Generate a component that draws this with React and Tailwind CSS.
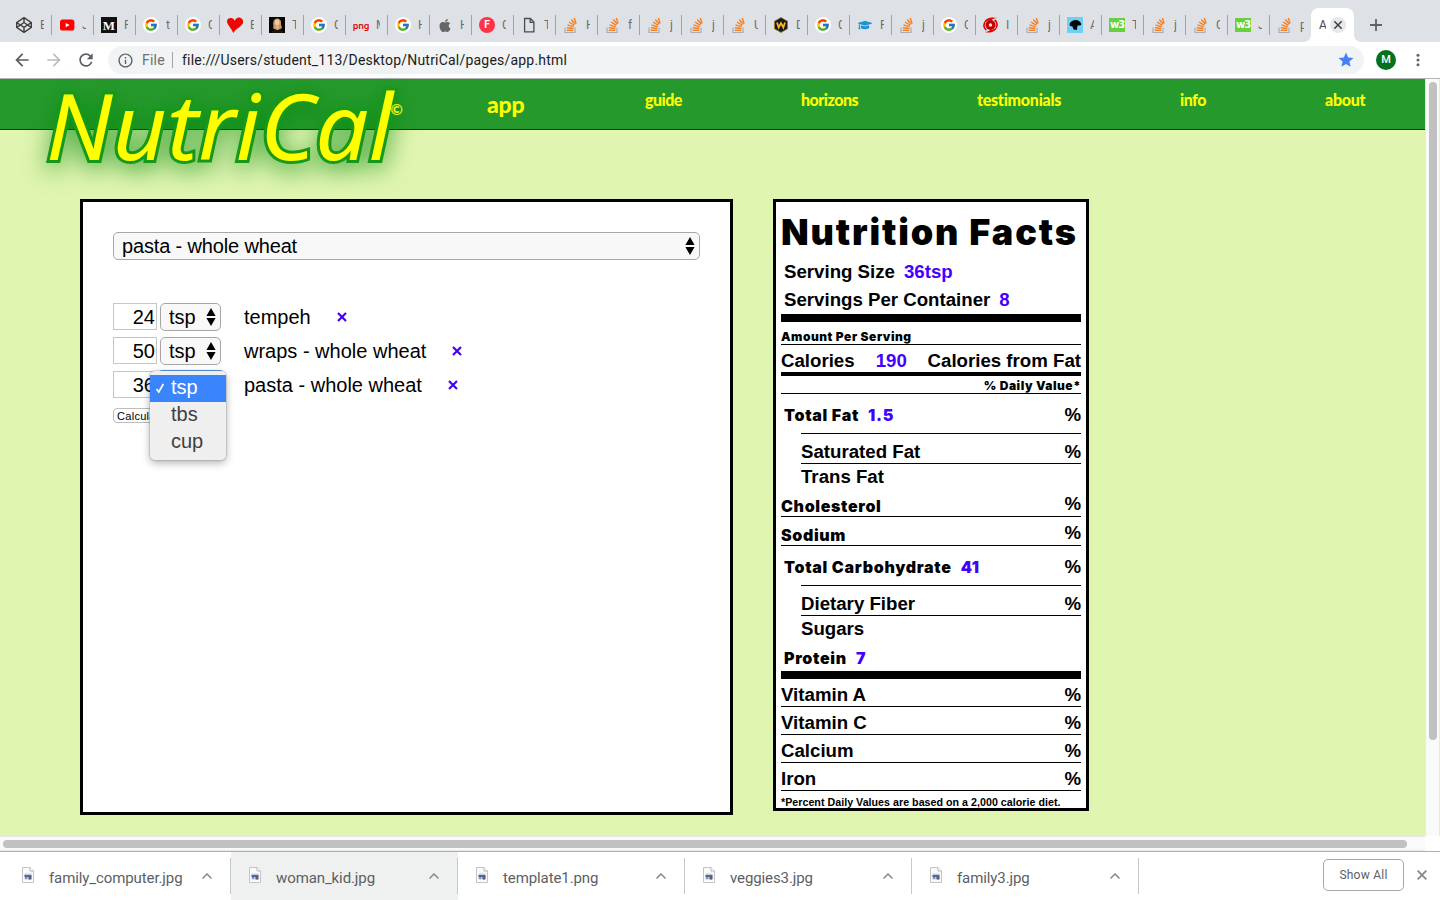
import React from "react";
import { FcGoogle } from "react-icons/fc";
import { FaApple, FaCodepen, FaGraduationCap } from "react-icons/fa";
import { MdArrowBack, MdArrowForward, MdRefresh, MdStar, MdInfoOutline } from "react-icons/md";

function Favicon({ kind }) {
  switch (kind) {
    case "codepen":
      return <FaCodepen className="h-4 w-4 text-[#3c3c3c]" />;
    case "youtube":
      return (
        <svg viewBox="0 0 16 16" className="h-4 w-4">
          <rect x="1" y="2.6" width="14.4" height="11" rx="2.6" fill="#f00" />
          <path d="M6.7 5.9v4.4l3.9-2.2z" fill="#fff" />
        </svg>
      );
    case "medium":
      return (
        <span className="flex h-4 w-4 items-center justify-center bg-[#12100e] font-['Liberation_Serif',serif] text-[13px] leading-none font-bold text-white">
          M
        </span>
      );
    case "google":
      return (
        <span className="flex h-4 w-4 items-center justify-center rounded-full bg-white">
          <FcGoogle className="h-[14px] w-[14px]" />
        </span>
      );
    case "heart":
      return (
        <svg viewBox="0 0 16 16" className="h-4 w-4">
          <path d="M6.2 16C5 12 .2 8 0 4.600 0 1.500 2.700.6 4.600 1 6.500 1.500 7.600 3 7.800 4 8.500 1.800 10.500.2 12.700.6 15.500 1.200 16.800 4 15.800 6.500 14.500 9.500 9 11.500 6.200 16z" fill="#f00500" />
        </svg>
      );
    case "photo":
      return (
        <svg viewBox="0 0 16 16" className="h-4 w-4">
          <rect width="16" height="16" fill="#0a0606" />
          <path d="M4.500 9C3.500 4 5.500 1.500 8 1.400c3 0 4.600 2.300 4 6L13 11l-2.500 1.500H6L4 11z" fill="#c99a62" />
          <ellipse cx="8.200" cy="5.400" rx="2.200" ry="3" fill="#f2c9a4" />
          <path d="M6.500 9h3.500l-.8 4H7.600z" fill="#e0ad87" />
          <path d="M2 16c1-2.500 3-3.500 4.500-3.500l2 1 2-1c1.500 0 3 1 3.500 3.500z" fill="#1a1212" />
        </svg>
      );
    case "png":
      return (
        <span className="flex h-4 w-4 items-center justify-center font-['Noto_Sans',sans-serif] text-[9px] leading-none font-semibold tracking-[-0.2px] text-[#e00000]">
          png
        </span>
      );
    case "apple":
      return <FaApple className="h-[15px] w-4 text-[#666]" />;
    case "f":
      return (
        <span className="flex h-4 w-4 items-center justify-center rounded-full bg-[#ff3347] font-['Roboto',sans-serif] text-[10px] leading-none font-bold text-white">
          F
        </span>
      );
    case "file":
      return (
        <svg viewBox="0 0 16 16" className="h-4 w-4" fill="none" stroke="#4a4d51" strokeWidth="1.300">
          <path d="M3.600 1.500h5.800l3.500 3.500v9.900H3.600z" />
          <path d="M9.200 1.500v3.800h3.700" />
        </svg>
      );
    case "so":
      return (
        <svg viewBox="0 0 16 16" className="h-4 w-4" fill="none">
          <path d="M2 10.500v5h10v-5" stroke="#a9adb1" strokeWidth="1.200" />
          <g stroke="#f48024" strokeWidth="1.400">
            <path d="M3.700 13.300h6.500" />
            <path d="M3.900 10.700l6.500 .8" />
            <path d="M4.500 7.900l6.200 2" />
            <path d="M6 5l5.400 3.400" />
            <path d="M8.300 2.500l4 4.800" />
            <path d="M11.300 1l1.800 5.600" />
          </g>
        </svg>
      );
    case "w":
      return (
        <svg viewBox="0 0 16 16" className="h-4 w-4">
          <path d="M8 .5l6.500 3.700v7.600L8 15.500 1.500 11.800V4.200z" fill="#161a26" stroke="#a07a20" strokeWidth=".8" />
          <path d="M4 5.500l1.700 5L8 6.200l2.300 4.300 1.700-5" fill="none" stroke="#fdb81e" strokeWidth="1.800" />
        </svg>
      );
    case "cap":
      return (
        <span className="flex h-4 w-4 items-center justify-center">
          <FaGraduationCap className="h-[12px] w-[14px] text-[#1795d4]" />
        </span>
      );
    case "spiral":
      return (
        <svg viewBox="0 0 16 16" className="h-4 w-4">
          <circle cx="7.500" cy="8" r="5" fill="#c40000" />
          <path d="M.8 7C1 2 7-.8 14 1 11 1.300 9.500 2 8.500 3 5 3 3 4.500.8 7z" fill="#e60000" />
          <path d="M14.200 9c-.2 5-6.200 7.800-12.200 6 3-.3 4-1 5-2 3.500 0 5.500-1.500 7.200-4z" fill="#e60000" />
          <path d="M1.800 5.500c-1.500 3-.5 6 1.500 7.500M13.200 10.500c1.500-3 .5-6-1.500-7.500" stroke="#e00000" strokeWidth="1.600" fill="none" />
          <path d="M4 6.500C5 4.500 7 4 9 4.300M11 9.500c-1 2-3 2.500-5 2.200" stroke="#800" strokeWidth=".7" fill="none" />
          <circle cx="7.500" cy="8" r="1.700" fill="#ffdada" />
        </svg>
      );
    case "dog":
      return (
        <svg viewBox="0 0 16 16" className="h-4 w-4">
          <rect width="16" height="16" fill="#6fd0f5" />
          <path d="M2.500 7C4 3.500 9 2 12 4c1.500 1.500 2.500 2.500 2.300 3.500-.5 1.200-2.800 1-3.800 1.200L9.800 13 6.500 12.500 5.500 9.500 3 9z" fill="#080808" />
        </svg>
      );
    default:
      return (
        <span className="flex h-[14px] w-4 items-center justify-center bg-[#67d03e] font-['DejaVu_Sans',sans-serif] text-[10px] leading-none font-bold tracking-[-1px] text-white">
          w3
        </span>
      );
  }
}

const TABS = [
  ["codepen", "E"], ["youtube", "J"], ["medium", "F"], ["google", "t"], ["google", "C"],
  ["heart", "E"], ["photo", "T"], ["google", "C"], ["png", "M"], ["google", "H"],
  ["apple", "H"], ["f", "C"], ["file", "T"], ["so", "H"], ["so", "f"], ["so", "j"],
  ["so", "j"], ["so", "U"], ["w", "D"], ["google", "C"], ["cap", "F"], ["so", "j"],
  ["google", "C"], ["spiral", "I"], ["so", "j"], ["dog", "A"], ["w3", "T"], ["so", "j"],
  ["so", "C"], ["w3", "J"], ["so", "p"],
];

function TabStrip() {
  return (
    <div className="flex h-[42px] items-end bg-[#dee1e6] pl-[10px] font-['Roboto',sans-serif] text-[12px]">
      {TABS.map(([kind, letter], i) => (
        <div key={i} className={`flex h-[34px] w-[42px] shrink-0 items-center ${i === 0 ? "pl-[6px]" : "pl-[7px]"}`}>
          <Favicon kind={kind} />
          <span className={`w-1 overflow-hidden text-[#6b6e73] ${i === 0 ? "ml-2" : "ml-[7px]"}`}>{letter}</span>
          {i < TABS.length - 1 && <span className="ml-auto h-5 w-px bg-[#a0a3a8]" />}
        </div>
      ))}
      <svg viewBox="0 0 8 8" className="-ml-[9px] h-2 w-2 shrink-0">
        <path d="M8 0v8H0c5 0 8-3 8-8z" fill="#fff" />
      </svg>
      <div className="flex h-[34px] w-[43px] shrink-0 items-center rounded-t-lg bg-white pl-2">
        <span className="w-[7px] overflow-hidden text-[#45474a]">A</span>
        <span className="ml-1 flex h-4 w-4 items-center justify-center rounded-full bg-[#e6e8eb]">
          <svg viewBox="0 0 8 8" className="h-2 w-2" stroke="#3c4043" strokeWidth="1.500">
            <path d="M.3.3l7.400 7.400M7.700.3L.3 7.700" />
          </svg>
        </span>
      </div>
      <svg viewBox="0 0 8 8" className="h-2 w-2 shrink-0">
        <path d="M0 0v8h8C3 8 0 5 0 0z" fill="#fff" />
      </svg>
      <svg viewBox="0 0 12 12" className="mb-[11px] ml-[8px] h-3 w-3" stroke="#5f6368" strokeWidth="1.800">
        <path d="M6 0v12M0 6h12" />
      </svg>
    </div>
  );
}

function Toolbar() {
  return (
    <div className="flex h-[37px] items-center border-b border-[#b4b4b6] bg-white font-['Roboto',sans-serif] text-[14px]">
      <MdArrowBack className="ml-[12px] h-5 w-5 text-[#5a5d62]" />
      <MdArrowForward className="ml-[12px] h-5 w-5 text-[#babcbe]" />
      <MdRefresh className="ml-[12px] h-5 w-5 text-[#5a5d62]" />
      <div className="ml-[12px] flex h-7 w-[1256px] items-center rounded-full bg-[#f1f3f4] pr-[9px] pl-[9px]">
        <MdInfoOutline className="h-[17px] w-[17px] text-[#5f6368]" />
        <span className="ml-2 w-[30px] tracking-[0.2px] text-[#6b6f74]">File</span>
        <span className="h-4 w-px bg-[#a2a5a9]" />
        <span className="ml-[9px] tracking-[0.210px] whitespace-nowrap text-[#1b1d20]">
          file:///Users/student_113/Desktop/NutriCal/pages/app.html
        </span>
        <MdStar className="ml-auto h-[18px] w-[18px] text-[#4380f5]" />
      </div>
      <span className="ml-3 flex h-5 w-5 items-center justify-center rounded-full bg-[#03711f] text-[11px] font-medium text-white">M</span>
      <svg viewBox="0 0 4 14" className="ml-[20px] h-[14px] w-1" fill="#5f6368">
        <circle cx="2" cy="2.200" r="1.500" />
        <circle cx="2" cy="7" r="1.500" />
        <circle cx="2" cy="11.800" r="1.500" />
      </svg>
    </div>
  );
}

function Logo() {
  return (
    <svg viewBox="0 0 400 110" className="relative z-10 ml-[30px] h-[110px] w-[400px] shrink-0 overflow-visible">
      <g className="[filter:drop-shadow(0_6px_12px_rgba(0,135,10,0.75))]">
        <text
          x="16"
          y="81"
          textLength="347"
          lengthAdjust="spacingAndGlyphs"
          className="fill-[#ffff00] stroke-[#169818] font-['Noto_Sans','Open_Sans',sans-serif] text-[92px] font-normal italic [paint-order:stroke]"
          strokeWidth="6"
        >
          NutriCal
        </text>
      </g>
      <text x="360.500" y="36" className="fill-[#e8f51a] font-['Lato',sans-serif] text-[15px] font-black">
        ©
      </text>
    </svg>
  );
}

function SiteHeader() {
  return (
    <header className="flex h-[51px] items-start border-b border-[#063a06] bg-[#26992c] font-['Lato',sans-serif] text-[16px] leading-5 font-black text-[#ffff00]">
      <Logo />
      <nav className="flex shrink-0 items-start pt-[11px] whitespace-nowrap">
        <a className="ml-[57px] w-[158px] pt-[4px] text-[23px] tracking-[-0.2px]">app</a>
        <a className="w-[156px] tracking-[-0.5px]">guide</a>
        <a className="w-[176px] tracking-[-0.5px]">horizons</a>
        <a className="w-[203px] tracking-[-0.25px]">testimonials</a>
        <a className="w-[145px] tracking-[-0.5px]">info</a>
        <a className="tracking-[-0.3px]">about</a>
      </nav>
    </header>
  );
}

function Arrows() {
  return (
    <svg viewBox="0 0 10 18" className="h-[18px] w-[10px] shrink-0" fill="#000">
      <path d="M5 0l4.600 8H.4zM5 18L.4 10h9.200z" />
    </svg>
  );
}

function IngredientRow({ qty, name, children }) {
  return (
    <div className="relative flex h-7 items-start">
      <div className="h-[27px] w-[44px] border border-[#c6c6c6] pr-px text-right leading-[27px]">{qty}</div>
      <div className="ml-[3px] flex h-7 w-[61px] items-center justify-between rounded-[5px] border border-[#a6a6a6] bg-[#f8f8f8] pr-1 pl-2">
        tsp
        <Arrows />
      </div>
      <span className="ml-[23px] leading-7">{name}</span>
      <svg viewBox="0 0 10 10" className="mt-[9px] ml-[26px] h-[10px] w-[10px]" stroke="#4400f0" strokeWidth="2.200">
        <path d="M1 1l8 8M9 1L1 9" />
      </svg>
      {children}
    </div>
  );
}

function UnitMenu() {
  return (
    <div className="absolute top-0 left-[37px] z-10 h-[89px] w-[76px] rounded-[5px] bg-[#efefef] py-1 leading-[24px] text-[#3f3f3f] shadow-[0_3px_8px_rgba(0,0,0,0.3),0_0_1px_1px_rgba(0,0,0,0.12)]">
      <div className="flex h-[27px] items-center bg-[#3b85fc] pb-[3px] pl-[6px] text-white">
        <svg viewBox="0 0 8 10" className="mt-[2px] mr-[7px] h-[10px] w-2" fill="none" stroke="#fff" strokeWidth="1.700">
          <path d="M.5 6l2.300 3L7.400.8" />
        </svg>
        tsp
      </div>
      <div className="h-[27px] pl-[21px]">tbs</div>
      <div className="h-[27px] pl-[21px]">cup</div>
    </div>
  );
}

function Calculator() {
  return (
    <section className="h-[616px] w-[653px] border-[3px] border-black bg-white px-[30px] pt-[30px] font-['Liberation_Sans',sans-serif] text-[20px] text-black">
      <div className="flex h-7 items-center justify-between rounded-[5px] border border-[#a6a6a6] bg-[#f8f8f8] pr-1 pl-2">
        <span className="tracking-[-0.15px]">pasta - whole wheat</span>
        <Arrows />
      </div>
      <div className="mt-[43px] flex flex-col gap-[6px]">
        <IngredientRow qty="24" name="tempeh" />
        <IngredientRow qty="50" name="wraps - whole wheat" />
        <IngredientRow qty="36" name="pasta - whole wheat">
          <span className="absolute -top-px left-[46px] h-[3px] w-[64px] rounded-t bg-[#5ea3ea]" />
          <UnitMenu />
        </IngredientRow>
      </div>
      <button className="mt-[9px] flex h-[15px] w-[60px] items-center rounded-[4px] border border-[#bdbdbd] bg-white pt-px pl-[3px] text-[11px] leading-none tracking-[0.3px]">
        Calculate
      </button>
    </section>
  );
}

const black = "font-['Inter',sans-serif] font-black";

function Value({ children }) {
  return <span className="ml-[9px] text-[#4400ff]">{children}</span>;
}

function MajorRow({ label, value }) {
  return (
    <>
      <div className="flex h-[39px] items-end justify-between pb-2">
        <span className={`${black} ml-[3px] pb-[2px] text-[16px] leading-4 tracking-[0.700px]`}>
          {label}
          <Value>{value}</Value>
        </span>
        <span>%</span>
      </div>
      <div className="ml-5 h-px bg-black" />
    </>
  );
}

function SubRows({ first, second }) {
  return (
    <div className="ml-5">
      <div className="flex h-[30px] items-end justify-between border-b border-black pb-px">
        <span>{first}</span>
        <span>%</span>
      </div>
      <div className="flex h-[23px] items-end">{second}</div>
    </div>
  );
}

function NutritionFacts() {
  return (
    <section className="h-[612px] w-[316px] border-[3px] border-black bg-white px-[5px] font-['Liberation_Sans',sans-serif] text-[18.67px] leading-5 font-bold whitespace-nowrap text-black">
      <h1 className={`${black} flex h-12 items-end text-[36px] leading-9 tracking-[1.850px]`}>Nutrition Facts</h1>
      <div className="ml-[3px] flex h-8 items-end">Serving Size<Value>36tsp</Value></div>
      <div className="ml-[3px] flex h-7 items-end">Servings Per Container<Value>8</Value></div>
      <div className="mt-1 h-2 bg-black" />
      <div className={`${black} flex h-[23px] items-end border-b border-black pb-px text-[12px] leading-3 tracking-[0.530px]`}>Amount Per Serving</div>
      <div className="flex h-[27px] items-end pb-px">
        Calories
        <span className="ml-[21px] text-[#4400ff]">190</span>
        <span className="ml-auto">Calories from Fat</span>
      </div>
      <div className="h-1 bg-black" />
      <div className={`${black} flex h-[18px] items-end justify-end border-b border-black pb-px text-[12px] leading-3 tracking-[0.530px]`}>% Daily Value*</div>
      <MajorRow label="Total Fat" value="1.5" />
      <SubRows first="Saturated Fat" second="Trans Fat" />
      <div className="flex h-[30px] items-end justify-between border-b border-black pb-[2px]">
        <span className={`${black} text-[16px] leading-4 tracking-[0.650px]`}>Cholesterol</span>
        <span>%</span>
      </div>
      <div className="flex h-[29px] items-end justify-between border-b border-black pb-[2px]">
        <span className={`${black} text-[16px] leading-4 tracking-[0.650px]`}>Sodium</span>
        <span>%</span>
      </div>
      <MajorRow label="Total Carbohydrate" value="41" />
      <SubRows first="Dietary Fiber" second="Sugars" />
      <div className={`${black} ml-[3px] flex h-8 items-end pb-[5px] text-[16px] leading-4 tracking-[0.700px]`}>Protein<Value>7</Value></div>
      <div className="h-2 bg-black" />
      {["Vitamin A", "Vitamin C", "Calcium", "Iron"].map((name) => (
        <div key={name} className="flex h-7 items-end justify-between border-b border-black pb-px">
          <span>{name}</span>
          <span>%</span>
        </div>
      ))}
      <div className="flex h-4 items-end text-[10.67px] leading-[10px] tracking-[0.030px]">*Percent Daily Values are based on a 2,000 calorie diet.</div>
    </section>
  );
}

const FILES = ["family_computer.jpg", "woman_kid.jpg", "template1.png", "veggies3.jpg", "family3.jpg"];

function Downloads() {
  return (
    <footer className="flex h-[49px] border-t border-[#aeb0b2] bg-white font-['Roboto',sans-serif] text-[#5b5f64]">
      {FILES.map((name, i) => (
        <div key={name} className={`flex shrink-0 items-center ${i === 0 ? "w-[231px] pl-[4px]" : "w-[227px]"} ${i === 1 ? "bg-[#eff1f1]" : ""}`}>
          <svg viewBox="0 0 12 16" className="mb-[2px] ml-[18px] h-4 w-3 shrink-0">
            <path d="M.5.5H8l3.500 3.500v11.500H.5z" fill="#fafafa" stroke="#c4c4c4" />
            <path d="M8 .5V4h3.500" fill="#fff" stroke="#b5b5b5" />
            <rect x="2.500" y="6.500" width="7" height="6" fill="#c8cfdd" />
            <path d="M2.500 8h7v2h-7z" fill="#4566b5" />
            <path d="M3 10h2v2H3z" fill="#8291a8" />
            <circle cx="8" cy="11" r="1.700" fill="#6b5f5c" />
          </svg>
          <span className="mt-1 ml-[15px] text-[15px] tracking-[-0.1px] whitespace-nowrap">{name}</span>
          <svg viewBox="0 0 10 6" className="mr-[18px] ml-auto h-[6px] w-[10px]" fill="none" stroke="#85898d" strokeWidth="1.500">
            <path d="M.5 5.500L5 1l4.500 4.500" />
          </svg>
          <span className="h-9 w-px bg-[#c6c8ca]" />
        </div>
      ))}
      <div className="ml-auto flex items-start pt-[7px] pr-[13px]">
        <button className="h-8 w-[81px] rounded-[5px] border border-[#a4a6a9] text-[12px] tracking-[0.25px]">Show All</button>
        <svg viewBox="0 0 10 10" className="mt-[11px] ml-[13px] h-[10px] w-[10px]" stroke="#85898d" strokeWidth="1.800">
          <path d="M.6.6l8.800 8.800M9.400.6L.6 9.400" />
        </svg>
      </div>
    </footer>
  );
}

export default function App() {
  return (
    <div className="flex h-[900px] w-[1440px] flex-col overflow-hidden bg-white">
      <TabStrip />
      <Toolbar />
      <div className="flex h-[757px] shrink-0">
        <main className="flex w-[1425px] flex-col bg-[#e0f5b0]">
          <SiteHeader />
          <div className="mt-[69px] ml-20 flex items-start gap-10">
            <Calculator />
            <NutritionFacts />
          </div>
        </main>
        <div className="w-[15px] border-x border-[#e8e8e8] bg-[#fafafa] pt-[3px] pl-[3px]">
          <div className="h-[658px] w-2 rounded-full bg-[#c1c1c1]" />
        </div>
      </div>
      <div className="h-[15px] w-[1425px] shrink-0 border-y border-[#e8e8e8] bg-[#fafafa] pt-[3px] pl-[3px]">
        <div className="h-2 w-[1404px] rounded-full bg-[#c1c1c1]" />
      </div>
      <Downloads />
    </div>
  );
}
